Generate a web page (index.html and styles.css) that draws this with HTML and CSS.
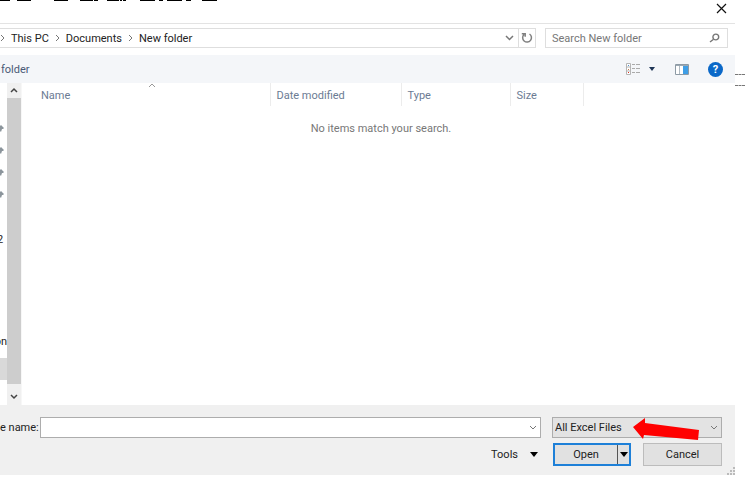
FILE: index.html
```html
<!DOCTYPE html>
<html lang="en">
<head>
<meta charset="UTF-8">
<meta name="viewport" content="width=device-width, initial-scale=1.0">
<title>Open</title>
<link rel="stylesheet" href="styles.css">
</head>
<body>
  <div class="page">
    <svg class="heading" width="220" height="1" viewBox="0 0 220 1">
      <path d="M0 0h10v1H0zM17 0h14v1H17zM54 0h14v1H54zM80 0h13v1H80zM94 0h4v1h-4zM107 0h12v1h-12zM120 0h2v1h-2zM123 0h3v1h-3zM140 0h15v1h-15zM159 0h4v1h-4zM167 0h15v1h-15zM186 0h5v1h-5zM202 0h15v1h-15z"/>
    </svg>
    <div class="dialog">
      <div class="titlebar">
        <button class="icon-button" aria-label="Close">
          <svg width="11" height="11" viewBox="0 0 11 11"><path d="M1 1l9 9M10 1l-9 9" fill="none" stroke="#111" stroke-width="1.2"/></svg>
        </button>
      </div>

      <div class="address-row">
        <nav class="address">
          <svg class="crumb" width="5" height="8" viewBox="0 0 5 8"><path d="M1 1l3 3-3 3"/></svg>
          <a href="#">This PC</a>
          <svg class="crumb" width="5" height="8" viewBox="0 0 5 8"><path d="M1 1l3 3-3 3"/></svg>
          <a href="#">Documents</a>
          <svg class="crumb" width="5" height="8" viewBox="0 0 5 8"><path d="M1 1l3 3-3 3"/></svg>
          <a href="#">New folder</a>
          <button class="icon-button history" aria-label="Previous locations">
            <svg width="9" height="6" viewBox="0 0 9 6"><path d="M1 1l3.500 3.500L8 1" fill="none" stroke="#777" stroke-width="1.500"/></svg>
          </button>
          <button class="icon-button refresh" aria-label="Refresh">
            <svg width="12" height="12" viewBox="0 0 12 12"><path d="M3 2.500A4.400 4.400 0 1 0 8.500 2M.8 1.700h3.400v3" fill="none" stroke="#808080" stroke-width="1.500"/></svg>
          </button>
        </nav>
        <div class="search">
          <input type="text" placeholder="Search New folder" aria-label="Search New folder">
          <svg width="11" height="11" viewBox="0 0 11 11"><g fill="none" stroke="#777" stroke-width="1.400"><circle cx="6.800" cy="4" r="2.900"/><path d="M4.600 6.200L1 9"/></g></svg>
        </div>
      </div>

      <div class="toolbar">
        <span class="new-folder">folder</span>
        <button class="icon-button" aria-label="Change your view">
          <svg width="14" height="12" viewBox="0 0 14 12">
            <path d="M.5.5h4v11h-4zM.5 4h4M.5 8h4" fill="#fff" stroke="#b5b5b5"/>
            <path d="M2 2h1v1H2z" fill="#4a90d0"/><path d="M2 6h1v1H2z" fill="#c07a50"/><path d="M2 9h1v1H2z" fill="#e03020"/>
            <path d="M6 1.500h3M10 1.500h4M6 5.500h3M10 5.500h4M6 9.500h3M10 9.500h4" stroke="#aaa"/>
          </svg>
        </button>
        <button class="icon-button view-more" aria-label="More options">
          <svg width="6" height="4" viewBox="0 0 6 4"><path d="M0 0h6L3 4z" fill="#1e3556"/></svg>
        </button>
        <button class="icon-button preview" aria-label="Show the preview pane">
          <svg width="14" height="11" viewBox="0 0 14 11"><path d="M.5.5h13v10H.5z" fill="#fff" stroke="#8d9aa5"/><path d="M1 1h12v1H1z" fill="#9ba8b2"/><path d="M4.500 2v8" stroke="#b0bac2"/><path d="M8 2h5v8H8z" fill="#3f9ee6"/></svg>
        </button>
        <button class="help" aria-label="Help">?</button>
      </div>

      <div class="content">
        <div class="sidebar">
          <div class="tree">
            <svg class="pin" width="4" height="8" viewBox="0 0 4 8"><path d="M0 1l1-1 3 3-1 1H2L1 7 0 6z"/></svg>
            <svg class="pin" width="4" height="8" viewBox="0 0 4 8"><path d="M0 1l1-1 3 3-1 1H2L1 7 0 6z"/></svg>
            <svg class="pin" width="4" height="8" viewBox="0 0 4 8"><path d="M0 1l1-1 3 3-1 1H2L1 7 0 6z"/></svg>
            <svg class="pin" width="4" height="8" viewBox="0 0 4 8"><path d="M0 1l1-1 3 3-1 1H2L1 7 0 6z"/></svg>
            <span class="folder-end">2</span>
            <span class="drive-end">on</span>
            <div class="selected"></div>
          </div>
          <div class="scrollbar">
            <svg width="8" height="6" viewBox="0 0 8 6"><path d="M1 5l3-3 3 3" fill="none" stroke="#444" stroke-width="1.500"/></svg>
            <div class="thumb"></div>
            <svg width="8" height="6" viewBox="0 0 8 6"><path d="M1 1l3 3 3-3" fill="none" stroke="#444" stroke-width="1.500"/></svg>
          </div>
        </div>
        <div class="files">
          <table>
            <thead>
              <tr>
                <th class="name">Name
                  <svg class="sort" width="8" height="5" viewBox="0 0 8 5"><path d="M1 4l3-3 3 3" fill="none" stroke="#999"/></svg>
                </th>
                <th class="date">Date modified</th>
                <th class="type">Type</th>
                <th class="size">Size</th>
                <th></th>
              </tr>
            </thead>
          </table>
          <p class="empty">No items match your search.</p>
        </div>
      </div>

      <div class="footer">
        <div class="file-row">
          <label for="filename">e name:</label>
          <div class="combo filename">
            <input type="text" id="filename">
            <svg width="8" height="5" viewBox="0 0 8 5"><path d="M1 1l3 3 3-3" fill="none" stroke="#777"/></svg>
          </div>
          <div class="combo filter">
            <select aria-label="File type">
              <option>All Excel Files</option>
            </select>
            <svg width="8" height="5" viewBox="0 0 8 5"><path d="M1 1l3 3 3-3" fill="none" stroke="#777"/></svg>
            <svg class="arrow" width="66" height="24" viewBox="0 0 66 24"><path d="M0 9L12 0v5l54 7-1 10-54-5-1 4z" fill="#f00"/></svg>
          </div>
        </div>
        <div class="action-row">
          <button class="tools">Tools
            <svg width="8" height="5" viewBox="0 0 8 5"><path d="M0 0h8L4 5z"/></svg>
          </button>
          <div class="split">
            <button class="open">Open</button>
            <button class="open-more" aria-label="Open options">
              <svg width="8" height="5" viewBox="0 0 8 5"><path d="M0 0h8L4 5z"/></svg>
            </button>
          </div>
          <button class="cancel">Cancel</button>
        </div>
        <svg class="grip" width="8" height="8" viewBox="0 0 8 8"><path d="M6 0h2v2H6zM3 3h2v2H3zM6 3h2v2H6zM0 6h2v2H0zM3 6h2v2H3zM6 6h2v2H6z" fill="#bbb"/></svg>
      </div>
    </div>
    <div class="margin-lines"></div>
  </div>
</body>
</html>
```
FILE: styles.css
```css
* {
  box-sizing: border-box;
}

body {
  margin: 0;
  background: #fff;
  color: #222;
  font-family: Roboto, "Open Sans", sans-serif;
  font-size: 11px;
  line-height: 16px;
}

button,
input,
select {
  margin: 0;
  padding: 0;
  border: 0;
  background: none;
  color: inherit;
  font: inherit;
}

svg {
  display: block;
  flex: none;
}

.page {
  position: relative;
  display: flex;
  min-height: 100vh;
  padding-bottom: 4px;
}

.heading {
  position: absolute;
  top: 0;
  left: 0;
}

.dialog {
  display: flex;
  flex: 1;
  flex-direction: column;
  min-width: 0;
}

.icon-button {
  display: flex;
  align-items: center;
  justify-content: center;
}

.titlebar {
  display: flex;
  justify-content: flex-end;
  padding: 3px 8px 9px;
  border-bottom: 1px solid #e3e3e3;
}

.address-row {
  display: flex;
  gap: 9px;
  padding: 4px 7px 7px 0;
}

.address {
  display: flex;
  flex: 1;
  align-items: center;
  gap: 6px;
  height: 20px;
  border: 1px solid #dedede;
  border-left: 0;
}

.address a {
  padding-top: 1px;
  color: #222;
  text-decoration: none;
}

.crumb path {
  fill: none;
  stroke: #777;
}

.history {
  margin-left: auto;
}

.refresh {
  width: 17px;
  height: 18px;
  margin-left: -2px;
  border-left: 1px solid #dedede;
}

.search {
  display: flex;
  align-items: center;
  width: 183px;
  height: 20px;
  padding: 0 7px 0 6px;
  border: 1px solid #dedede;
}

.search input {
  flex: 1;
  min-width: 0;
  padding-top: 1px;
}

.search input::placeholder {
  color: #777;
  opacity: 1;
}

.toolbar {
  display: flex;
  align-items: center;
  height: 28px;
  padding-right: 12px;
  background: #f4f6f9;
}

.new-folder {
  flex: 1;
  padding: 1px 0 0 1px;
  color: #4a5a76;
}

.view-more {
  margin: 0 20px 0 9px;
}

.preview {
  margin-right: 19px;
}

.help {
  width: 15px;
  height: 15px;
  border-radius: 50%;
  background: #0a68c8;
  color: #fff;
  font-weight: bold;
  line-height: 15px;
}

.content {
  display: flex;
  flex: 1;
}

.sidebar {
  display: flex;
  width: 22px;
}

.tree {
  display: flex;
  flex-direction: column;
  width: 7px;
  padding-top: 42px;
  overflow: hidden;
}

.pin {
  margin-bottom: 14px;
  fill: #8c959c;
}

.folder-end {
  margin-top: 19px;
  margin-left: -3px;
}

.drive-end {
  align-self: flex-end;
  margin-top: 86px;
}

.selected {
  height: 22px;
  margin-top: 8px;
  background: #d9d9d9;
}

.scrollbar {
  display: flex;
  flex-direction: column;
  align-items: center;
  gap: 5px;
  width: 15px;
  padding: 4px 0 5px;
  border-right: 1px solid #f7f7f7;
  background: #f0f0f0;
}

.thumb {
  flex: 1;
  width: 14px;
  margin-bottom: 5px;
  background: #cdcdcd;
}

.files {
  flex: 1;
}

table {
  width: 100%;
  border-collapse: collapse;
  table-layout: fixed;
}

th {
  height: 23px;
  padding: 2px 5px 0 6px;
  border-right: 1px solid #ececec;
  color: #6b7b93;
  font-weight: normal;
  text-align: left;
}

th:last-child {
  border-right: 0;
}

.name {
  position: relative;
  width: 248px;
  padding-left: 19px;
}

.sort {
  position: absolute;
  top: 0;
  left: 51%;
}

.date {
  width: 131px;
}

.type {
  width: 109px;
}

.size {
  width: 73px;
}

.empty {
  margin: 15px 0 0;
  padding-left: 5px;
  color: #777;
  text-align: center;
}

.footer {
  position: relative;
  padding: 12px 13px 9px 0;
  background: #f0f0f0;
}

.file-row {
  display: flex;
  align-items: center;
}

.file-row label {
  width: 40px;
  white-space: nowrap;
}

.combo {
  position: relative;
  display: flex;
  align-items: center;
  height: 21px;
  padding-right: 3px;
  border: 1px solid #adadad;
}

.combo input,
.combo select {
  flex: 1;
  min-width: 0;
  height: 100%;
  appearance: none;
}

.filename {
  flex: 1;
  margin-right: 11px;
  background: #fff;
}

.filter {
  width: 170px;
  padding-left: 2px;
  background: #e3e3e3;
}

.arrow {
  position: absolute;
  top: 0;
  left: 80px;
}

.action-row {
  display: flex;
  align-items: center;
  justify-content: flex-end;
  margin-top: 5px;
}

.tools {
  display: flex;
  align-items: center;
  gap: 12px;
  margin-right: 15px;
}

.split {
  display: flex;
  width: 78px;
  height: 23px;
  margin-right: 12px;
  border: 2px solid #1e80d8;
  background: #e1e1e1;
}

.open {
  flex: 1;
}

.open-more {
  display: flex;
  align-items: center;
  justify-content: center;
  width: 12px;
  border-left: 1px solid #555;
}

.cancel {
  width: 79px;
  height: 23px;
  border: 1px solid #bcbcbc;
  background: #e1e1e1;
}

.grip {
  position: absolute;
  right: 0;
  bottom: 0;
}

.margin-lines {
  align-self: flex-start;
  width: 10px;
  height: 12px;
  margin-top: 74px;
  border-top: 1px dashed #777;
  border-bottom: 1px dashed #777;
}
```
